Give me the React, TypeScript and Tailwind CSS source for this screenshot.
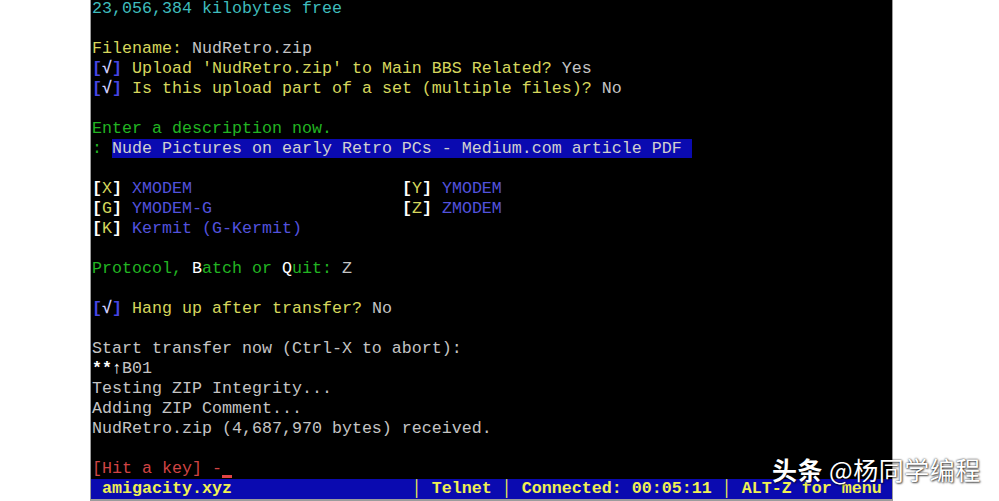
import React from "react";

const C = {
  cyan: "text-[#3fbcbc]",
  yellow: "text-[#d6d65c]",
  grey: "text-[#c4c4c4]",
  green: "text-[#22b422]",
  blue: "text-[#5252dc]",
  white: "text-[#ffffff]",
  red: "text-[#d04444]",
};

function Row({ children }: { children?: React.ReactNode }) {
  return <div className="h-[20px] leading-[20px] whitespace-pre">{children ?? " "}</div>;
}

function Check() {
  return (
    <>
      <span className="text-[#4646e6] font-bold">[</span>
      <span className="text-[#d0d0ff] font-bold">√</span>
      <span className="text-[#4646e6] font-bold">]</span>{" "}
    </>
  );
}

function Proto({ k, name, pad }: { k: string; name: string; pad?: number }) {
  const text = pad ? name.padEnd(pad, " ") : name;
  return (
    <>
      <span className={`${C.white} font-bold`}>[</span>
      <span className={C.yellow}>{k}</span>
      <span className={`${C.white} font-bold`}>]</span>{" "}
      <span className={C.blue}>{text}</span>
    </>
  );
}

export default function App() {
  return (
    <div className="relative h-[501px] w-[999px] bg-white pl-[90px] overflow-hidden">
      <div className="h-[501px] w-[803px] bg-black border-l border-r border-b-2 border-[#9c9c9c] overflow-hidden font-['Liberation_Mono',monospace] text-[16.6667px]">
        <div className="-mt-[1px] flex flex-col">
          <div className="pl-[1px]">
            <Row><span className={C.cyan}>23,056,384 kilobytes free</span></Row>
            <Row />
            <Row>
              <span className={C.yellow}>Filename: </span>
              <span className={C.grey}>NudRetro.zip</span>
            </Row>
            <Row>
              <Check />
              <span className={C.yellow}>Upload 'NudRetro.zip' to Main BBS Related? </span>
              <span className={C.grey}>Yes</span>
            </Row>
            <Row>
              <Check />
              <span className={C.yellow}>Is this upload part of a set (multiple files)? </span>
              <span className={C.grey}>No</span>
            </Row>
            <Row />
            <Row><span className={C.green}>Enter a description now.</span></Row>
            <Row>
              <span className={C.green}>: </span>
              <span className="bg-[#0a0ab0] text-[#d0d0d0]">Nude Pictures on early Retro PCs - Medium.com article PDF </span>
            </Row>
            <Row />
            <Row>
              <Proto k="X" name="XMODEM" pad={27} />
              <Proto k="Y" name="YMODEM" />
            </Row>
            <Row>
              <Proto k="G" name="YMODEM-G" pad={27} />
              <Proto k="Z" name="ZMODEM" />
            </Row>
            <Row>
              <Proto k="K" name="Kermit (G-Kermit)" />
            </Row>
            <Row />
            <Row>
              <span className={C.green}>Protocol, </span>
              <span className={C.white}>B</span>
              <span className={C.green}>atch or </span>
              <span className={C.white}>Q</span>
              <span className={C.green}>uit: </span>
              <span className={C.grey}>Z</span>
            </Row>
            <Row />
            <Row>
              <Check />
              <span className={C.yellow}>Hang up after transfer? </span>
              <span className={C.grey}>No</span>
            </Row>
            <Row />
            <Row><span className={C.grey}>Start transfer now (Ctrl-X to abort):</span></Row>
            <Row>
              <span className={`${C.white} font-bold`}>**↑</span>
              <span className={C.grey}>B01</span>
            </Row>
            <Row><span className={C.grey}>Testing ZIP Integrity...</span></Row>
            <Row><span className={C.grey}>Adding ZIP Comment...</span></Row>
            <Row><span className={C.grey}>NudRetro.zip (4,687,970 bytes) received.</span></Row>
            <Row />
            <Row>
              <span className={C.red}>[Hit a key] -</span>
              <span className="inline-block w-[10px] h-[19px] align-top border-b-[3px] border-[#e04444]" />
            </Row>
          </div>

          {/* Status bar */}
          <div className="h-[20px] leading-[20px] whitespace-pre bg-[#0a0ab0] text-[#f0f052] font-bold pl-[1px]">
            {" amigacity.xyz                  │ Telnet │ Connected: 00:05:11 │ ALT-Z for menu"}
          </div>
        </div>
      </div>

      {/* watermark */}
      <div className="absolute left-[772px] top-[454px] text-[25px] leading-[30px] tracking-[0.5px] text-white font-['Noto_Sans_CJK_SC',sans-serif] [text-shadow:0_0_2px_rgba(0,0,0,0.9),1px_1px_2px_rgba(0,0,0,0.6)] whitespace-pre">
        <span className="font-bold">头条</span> @杨同学编程
      </div>
    </div>
  );
}
